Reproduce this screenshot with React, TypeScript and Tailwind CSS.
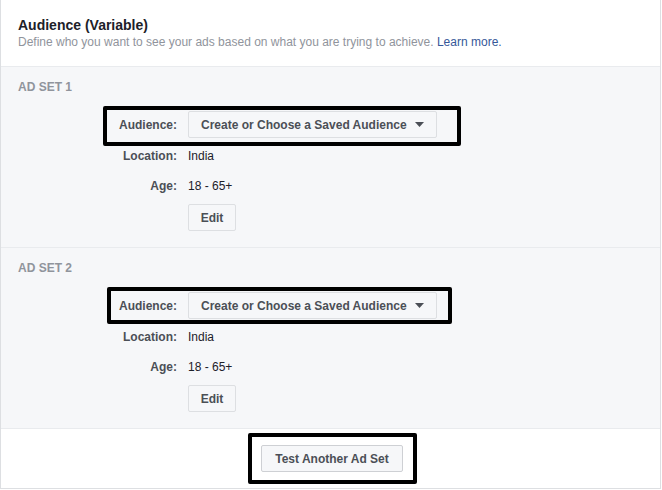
import { ReactNode } from 'react';

const font = { fontFamily: '"Liberation Sans", Arial, Helvetica, sans-serif' };

function Caret() {
  return (
    <svg width="9" height="5" viewBox="0 0 9 5" className="ml-2 shrink-0">
      <path d="M0 0h9L4.5 5z" fill="#4b4f56" />
    </svg>
  );
}

function Row({ label, children, className = '' }: { label: string; children: ReactNode; className?: string }) {
  return (
    <div className={`flex items-center ${className}`}>
      <div className="w-[160px] pr-[1px] text-right text-[12px] font-bold text-[#4b4f56] leading-4">{label}</div>
      <div className="ml-[10px] flex items-center">{children}</div>
    </div>
  );
}

function AdSet({ n, box }: { n: number; box: string }) {
  return (
    <section className="bg-[#f6f7f9] border-b border-[#e9ebee] px-[17px] pt-3 pb-4">
      <div className="text-[12px] font-bold text-[#90949c] leading-4">AD SET {n}</div>
      <Row label="Audience:" className="mt-4">
        <div className="relative">
          <button className="flex h-[27px] w-[249px] items-center border border-[#dddfe2] bg-[#f6f7f9] pl-3 pr-3 text-[12px] font-bold text-[#4b4f56] rounded-[2px]">
            <span>Create or Choose a Saved Audience</span>
            <Caret />
          </button>
          <div className={`pointer-events-none absolute border-4 border-black rounded-[2px] ${box}`} />
        </div>
      </Row>
      <Row label="Location:" className="mt-[10px]">
        <span className="text-[12px] leading-4 text-[#1d2129]">India</span>
      </Row>
      <Row label="Age:" className="mt-[14px]">
        <span className="text-[12px] leading-4 text-[#1d2129]">18 - 65+</span>
      </Row>
      <Row label="" className="mt-[10px]">
        <button className="h-[27px] w-[48px] border border-[#dddfe2] bg-[#f6f7f9] text-[12px] font-bold text-[#4b4f56] rounded-[2px]">
          Edit
        </button>
      </Row>
    </section>
  );
}

export default function App() {
  return (
    <div className="bg-white w-[661px] h-[490px]" style={font}>
      <div className="border-l border-r border-b border-[#dddfe2] h-[489px]">
        <header className="px-[17px] pt-4 pb-4 border-b border-[#e9ebee]">
          <h2 className="text-[14px] font-bold leading-[18px] text-[#1d2129]">Audience (Variable)</h2>
          <p className="text-[12px] leading-4 text-[#90949c]">
            Define who you want to see your ads based on what you are trying to achieve.{' '}
            <span className="text-[#365899]">Learn more.</span>
          </p>
        </header>
        <AdSet n={1} box="-left-[85px] -right-[24px] -top-[5px] -bottom-[8px]" />
        <AdSet n={2} box="-left-[81px] -right-[15px] -top-[5px] -bottom-[5px]" />
        <div className="flex justify-center pt-4 pl-[3px]">
          <div className="relative">
            <button className="h-[27px] w-[142px] border border-[#ced0d4] bg-[#f6f7f9] text-[12px] font-bold text-[#4b4f56] rounded-[2px]">
              Test Another Ad Set
            </button>
            <div className="pointer-events-none absolute -left-[13px] -right-[14px] -top-[12px] -bottom-[12px] border-4 border-black rounded-[2px]" />
          </div>
        </div>
      </div>
    </div>
  );
}
